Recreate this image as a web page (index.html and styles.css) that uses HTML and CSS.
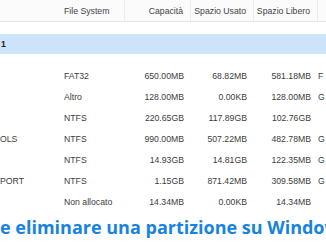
FILE: index.html
```html
<!DOCTYPE html>
<html lang="it">
<head>
<meta charset="utf-8">
<title>Partizioni</title>
<link rel="stylesheet" href="styles.css">
</head>
<body>
<div class="list">
  <div class="row head">
    <div class="c name"></div>
    <div class="c fs">File System</div>
    <div class="c num">Capacità</div>
    <div class="c num">Spazio Usato</div>
    <div class="c num">Spazio Libero</div>
    <div class="c type"></div>
  </div>
  <div class="disk"><span class="disk-name">1</span></div>
  <div class="row">
    <div class="c name"></div><div class="c fs">FAT32</div><div class="c num">650.00MB</div><div class="c num">68.82MB</div><div class="c num">581.18MB</div><div class="c type">F</div>
  </div>
  <div class="row">
    <div class="c name"></div><div class="c fs">Altro</div><div class="c num">128.00MB</div><div class="c num">0.00KB</div><div class="c num">128.00MB</div><div class="c type">G</div>
  </div>
  <div class="row">
    <div class="c name"></div><div class="c fs">NTFS</div><div class="c num">220.65GB</div><div class="c num">117.89GB</div><div class="c num">102.76GB</div><div class="c type"></div>
  </div>
  <div class="row">
    <div class="c name">OLS</div><div class="c fs">NTFS</div><div class="c num">990.00MB</div><div class="c num">507.22MB</div><div class="c num">482.78MB</div><div class="c type">G</div>
  </div>
  <div class="row">
    <div class="c name"></div><div class="c fs">NTFS</div><div class="c num">14.93GB</div><div class="c num">14.81GB</div><div class="c num">122.35MB</div><div class="c type">G</div>
  </div>
  <div class="row">
    <div class="c name">PORT</div><div class="c fs">NTFS</div><div class="c num">1.15GB</div><div class="c num">871.42MB</div><div class="c num">309.58MB</div><div class="c type">G</div>
  </div>
  <div class="row">
    <div class="c name"></div><div class="c fs">Non allocato</div><div class="c num">14.34MB</div><div class="c num">0.00KB</div><div class="c num">14.34MB</div><div class="c type"></div>
  </div>
</div>
<h1 class="title">e eliminare una partizione su Windows</h1>
</body>
</html>
```
FILE: styles.css
```css
* { box-sizing: border-box; }
html, body { margin: 0; padding: 0; background: #ffffff; }
body { width: 326px; overflow: hidden; font-family: "Liberation Sans", Arial, sans-serif; }

.list {
  width: 326px;
  overflow: hidden;
  font-size: 8.7px;
  color: #3c3c3c;
}

.row {
  display: grid;
  grid-template-columns: 60px 65px 66px 63px 64px 8px;
  height: 21px;
  white-space: nowrap;
}

.c {
  display: flex;
  align-items: center;
  height: 100%;
  overflow: hidden;
}

.name { padding-left: 0; }
.fs { padding-left: 4px; }
.num { justify-content: flex-end; padding-right: 7px; }
.type { padding-left: 0; }

.head {
  height: 22px;
  background: #fbfbfb;
  border-bottom: 1px solid #e3e3e3;
  margin-bottom: 12px;
  color: #444444;
}
.head .fs,
.head .num { border-right: 1px solid #ececec; }

.disk {
  height: 20px;
  background: #cde3fa;
  display: flex;
  align-items: center;
  padding-left: 1px;
  margin-bottom: 11px;
  font-weight: bold;
  color: #222222;
}

.title {
  margin: 3px 0 0;
  font: 700 18px/24px "Open Sans", sans-serif;
  color: #1783e0;
  white-space: nowrap;
  overflow: hidden;
}
```
